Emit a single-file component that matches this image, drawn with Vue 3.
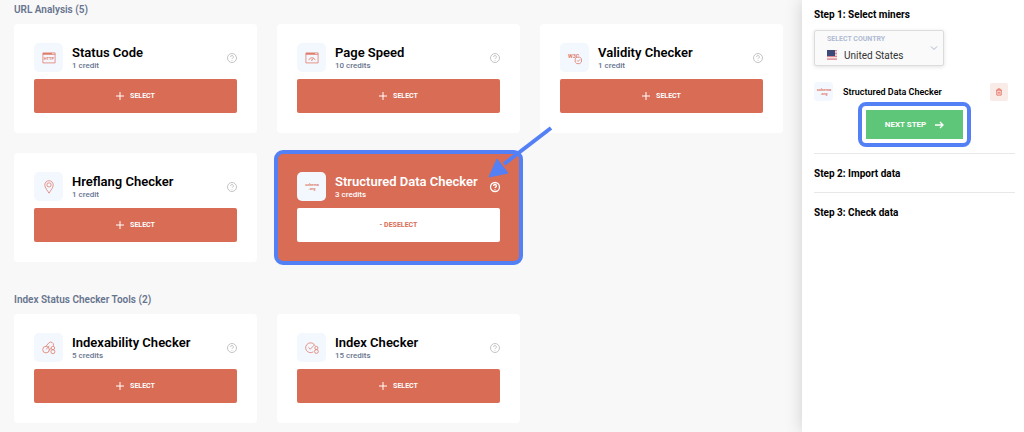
<script setup>
import { ref, computed } from 'vue'

const groups = [
  {
    title: 'URL Analysis (5)',
    miners: [
      { id: 'status', name: 'Status Code', cost: '1 credit' },
      { id: 'speed', name: 'Page Speed', cost: '10 credits' },
      { id: 'validity', name: 'Validity Checker', cost: '1 credit' },
      { id: 'hreflang', name: 'Hreflang Checker', cost: '1 credit' },
      { id: 'schema', name: 'Structured Data Checker', cost: '3 credits' },
    ],
  },
  {
    title: 'Index Status Checker Tools (2)',
    miners: [
      { id: 'indexability', name: 'Indexability Checker', cost: '5 credits' },
      { id: 'index', name: 'Index Checker', cost: '15 credits' },
    ],
  },
]
const selected = ref('schema')
const country = ref('United States')
const chosen = computed(() =>
  groups.flatMap((g) => g.miners).filter((m) => m.id === selected.value)
)
function toggle(id) {
  selected.value = selected.value === id ? '' : id
}
</script>

<template>
  <div class="page">
    <main class="catalog">
      <section v-for="g in groups" :key="g.title" class="group">
        <h2 class="group-title">{{ g.title }}</h2>
        <div class="grid">
          <article v-for="m in g.miners" :key="m.id" class="card" :class="{ active: m.id === selected }">
            <header class="card-head">
              <span class="tile">
                <svg v-if="m.id === 'status'" class="glyph" viewBox="0 0 14 14">
                  <path d="M.9 1.9h12.2v10H.9zM.9 3.4h12.2" />
                  <path d="M1 2.6h9" stroke-width="1.2" />
                  <text x="7" y="9.4" font-size="4">HTTP</text>
                </svg>
                <svg v-else-if="m.id === 'speed'" class="glyph" viewBox="0 0 14 14">
                  <path d="M.9 1.9h12.2v10H.9zM.9 3.4h12.2" />
                  <path d="M1 2.6h9" stroke-width="1.2" />
                  <path d="M3.8 9.2a3.3 3.3 0 0 1 6.4 0M6.8 9.2l1.6-2M6 9.2h1.5" />
                </svg>
                <svg v-else-if="m.id === 'validity'" class="glyph" viewBox="0 0 14 14">
                  <text x="5.6" y="7.4" font-size="5.4">W3C</text>
                  <path d="M8.8 6.2h3l1.700 1.600v3.200l-1.700 1.600h-3l-1.600-1.600V7.800z" fill="#f3f7fe" />
                  <path d="M9 9.4l1.100 1.100 2-2.200" />
                </svg>
                <svg v-else-if="m.id === 'hreflang'" class="glyph" viewBox="0 0 14 14">
                  <path d="M7 13.2C5.7 10.6 2.8 8 2.8 4.9a4.2 4.2 0 0 1 8.4 0C11.2 8 8.3 10.6 7 13.2z" />
                  <circle cx="7" cy="4.9" r="2.1" />
                </svg>
                <svg v-else-if="m.id === 'schema'" class="glyph" viewBox="0 0 14 14">
                  <text x="7" y="6" font-size="3.8">schema</text>
                  <text x="7" y="9.8" font-size="3.8">.org</text>
                </svg>
                <svg v-else-if="m.id === 'indexability'" class="glyph" viewBox="0 0 14 14">
                  <circle cx="4" cy="8.6" r="3.3" />
                  <path d="M4 5.3l2.6-3.2a2.8 2.8 0 0 1 4.8 2.7M7.2 9.5l1.500-2.300M4.100 8.500l3.200-3.700" />
                  <circle cx="10.9" cy="7" r="1.7" />
                  <circle cx="10.9" cy="10.7" r="2" />
                </svg>
                <svg v-else class="glyph" viewBox="0 0 14 14">
                  <path d="M8.3 10.800a4.900 4.900 0 1 1 1.800-5.900M3.400 6.300l1.900 1.900 3.800-4" />
                  <circle cx="11.4" cy="7" r="1.6" />
                  <circle cx="11.4" cy="10.5" r="1.9" />
                </svg>
              </span>
              <div class="card-text">
                <h3>{{ m.name }}</h3>
                <p>{{ m.cost }}</p>
              </div>
              <button class="help" :aria-label="'About ' + m.name">
                <svg viewBox="0 0 12 12">
                  <circle cx="6" cy="6" r="4.5" />
                  <path d="M4.6 4.9a1.400 1.400 0 1 1 2.100 1.200Q6 6.500 6 7.100M6 8v.7" />
                </svg>
              </button>
            </header>
            <button class="pick" @click="toggle(m.id)">
              <template v-if="m.id === selected">- DESELECT</template>
              <template v-else>
                <svg viewBox="0 0 8 8"><path d="M4 0v8M0 4h8" /></svg>
                SELECT
              </template>
            </button>
            <svg v-if="m.id === 'schema'" class="pointer" viewBox="0 0 70 58" aria-hidden="true">
              <path d="M65 6L18 42" />
              <polygon points="3,55 11,37 22,51" />
            </svg>
          </article>
        </div>
      </section>
    </main>

    <aside class="steps">
      <section class="step">
        <h2>Step 1: Select miners</h2>
        <div class="country">
          <label for="country">SELECT COUNTRY</label>
          <div class="country-row">
            <svg class="flag" viewBox="0 0 10 10">
              <rect width="10" height="10" fill="#f4dfe1" />
              <path d="M0 .7h10M0 3.500h10M0 6.300h10M0 9.200h10" stroke="#dd8790" stroke-width="1.3" />
              <rect width="8" height="6" fill="#3c4a78" />
            </svg>
            <select id="country" v-model="country">
              <option>United States</option>
            </select>
          </div>
          <svg class="chevron" viewBox="0 0 8 8"><path d="M1 2.500l3 3 3-3" /></svg>
        </div>
        <div v-for="m in chosen" :key="m.id" class="chosen">
          <span class="tile small">
            <svg class="glyph" viewBox="0 0 14 14">
              <text x="7" y="6" font-size="4">schema</text>
              <text x="7" y="10" font-size="4">.org</text>
            </svg>
          </span>
          <span class="chosen-name">{{ m.name }}</span>
          <button class="remove" :aria-label="'Remove ' + m.name" @click="toggle(m.id)">
            <svg viewBox="0 0 8 8"><path d="M1 2.200h6M2.900 2V.9h2.200V2M1.800 2.300v4.800h4.400V2.300M3.300 3.700v2M4.700 3.700v2" /></svg>
          </button>
        </div>
        <div class="next-wrap">
          <button class="next">
            NEXT STEP
            <svg viewBox="0 0 10 8"><path d="M1 4h8M6 1l3 3-3 3" /></svg>
          </button>
        </div>
      </section>
      <section class="step"><h2>Step 2: Import data</h2></section>
      <section class="step"><h2>Step 3: Check data</h2></section>
    </aside>
  </div>
</template>

<style>
body {
  margin: 0;
  overflow: hidden;
}
</style>

<style scoped>
* {
  box-sizing: border-box;
}
.page {
  display: grid;
  grid-template-columns: minmax(0, 1fr) 222px;
  min-height: 100vh;
  background: #f8f8f8;
  font-family: Roboto, "Liberation Sans", sans-serif;
  color: #000;
}
h2, h3, p {
  margin: 0;
}
button, select {
  font-family: inherit;
  border: 0;
  padding: 0;
  cursor: pointer;
}
svg {
  display: block;
  fill: none;
}
.catalog {
  padding: 3px 19px 9px 14px;
}
.group + .group {
  margin-top: 31px;
}
.group-title {
  font-size: 10px;
  line-height: 14px;
  font-weight: 600;
  color: #67748e;
  margin-bottom: 7px;
}
.grid {
  display: grid;
  grid-template-columns: repeat(3, minmax(0, 1fr));
  gap: 20px;
}
.card {
  position: relative;
  background: #fff;
  border-radius: 4px;
  padding: 19px 20px 20px;
}
.card-head {
  display: flex;
  align-items: center;
  margin-bottom: 7px;
}
.tile {
  flex: none;
  display: grid;
  place-items: center;
  width: 29px;
  height: 29px;
  border-radius: 5px;
  background: #f3f7fe;
}
.glyph {
  width: 14px;
  height: 14px;
  stroke: #e07c6c;
  stroke-width: 0.8;
  overflow: visible;
}
.glyph text {
  fill: #e07c6c;
  stroke: none;
  font-weight: 700;
  text-anchor: middle;
}
.card-text {
  flex: 1;
  min-width: 0;
  margin-left: 9px;
  white-space: nowrap;
}
h3 {
  font-size: 13px;
  line-height: 17px;
  font-weight: 600;
}
.card-text p {
  font-size: 8px;
  line-height: 10px;
  font-weight: 500;
  color: #67748e;
}
.help {
  flex: none;
  margin-right: -1px;
  background: none;
}
.help svg {
  width: 12px;
  height: 12px;
  stroke: #c4c4c4;
}
.pick {
  display: flex;
  align-items: center;
  justify-content: center;
  gap: 6px;
  width: 100%;
  height: 34px;
  border-radius: 2px;
  background: #d96c55;
  color: #fff;
  font-size: 7px;
  font-weight: 700;
}
.pick svg {
  width: 8px;
  height: 8px;
  stroke: #fff;
}
.active {
  background: #d96c55;
  color: #fff;
  border-radius: 6px;
  outline: 4px solid #5380f4;
  outline-offset: -1px;
}
.active .card-text p {
  color: #fff;
}
.active .help svg {
  stroke: #fff;
  stroke-width: 1.3;
}
.active .pick {
  background: #fff;
  color: #d96c55;
}
.pointer {
  position: absolute;
  z-index: 1;
  top: -31px;
  right: -36px;
  width: 70px;
  height: 58px;
  fill: #5380f4;
  stroke: #5380f4;
  pointer-events: none;
}
.pointer path {
  stroke-width: 4;
}
.steps {
  padding: 7px 9px 0 12px;
  background: #fff;
  box-shadow: 0 0 16px rgba(0, 0, 0, 0.17);
}
.step + .step {
  border-top: 1px solid #e8e8e8;
  padding: 12px 0 11px;
}
.step h2 {
  font-size: 10px;
  line-height: 15px;
  font-weight: 700;
}
.country {
  position: relative;
  width: 130px;
  height: 36px;
  margin-top: 8px;
  padding: 4px 12px;
  border: 1px solid #dcdcdc;
  border-radius: 2px;
  background: #fafafa;
  box-shadow: 0 1px 4px rgba(0, 0, 0, 0.12);
}
.country label {
  display: block;
  font-size: 7px;
  line-height: 8px;
  font-weight: 700;
  color: #b0bbd3;
}
.country-row {
  display: flex;
  align-items: center;
  gap: 7px;
  margin-top: 5px;
}
.flag {
  width: 10px;
  height: 10px;
}
.country select {
  appearance: none;
  flex: 1;
  height: 14px;
  background: none;
  color: #333;
  font-size: 10px;
  font-weight: 400;
}
.chevron {
  position: absolute;
  right: 5px;
  top: 13px;
  width: 8px;
  height: 8px;
  stroke: #a9b6d0;
  pointer-events: none;
}
.chosen {
  display: flex;
  align-items: center;
  margin-top: 16px;
  padding-right: 7px;
}
.small {
  width: 19px;
  height: 19px;
  border-radius: 4px;
}
.chosen-name {
  flex: 1;
  margin-left: 10px;
  font-size: 9px;
  line-height: 12px;
  font-weight: 600;
}
.remove {
  display: grid;
  place-items: center;
  width: 18px;
  height: 18px;
  border-radius: 2px;
  background: #f9ebe8;
}
.remove svg {
  width: 8px;
  height: 8px;
  stroke: #e0604f;
  stroke-width: 0.8;
}
.next-wrap {
  width: fit-content;
  margin: 1px auto 6px;
  padding: 4px;
  border: 4px solid #5380f4;
  border-radius: 8px;
}
.next {
  display: flex;
  align-items: center;
  justify-content: center;
  gap: 8px;
  width: 97px;
  height: 29px;
  background: #5dc678;
  color: #fff;
  font-size: 8px;
  font-weight: 700;
}
.next svg {
  width: 10px;
  height: 8px;
  stroke: #fff;
  stroke-width: 1.3;
}
</style>
